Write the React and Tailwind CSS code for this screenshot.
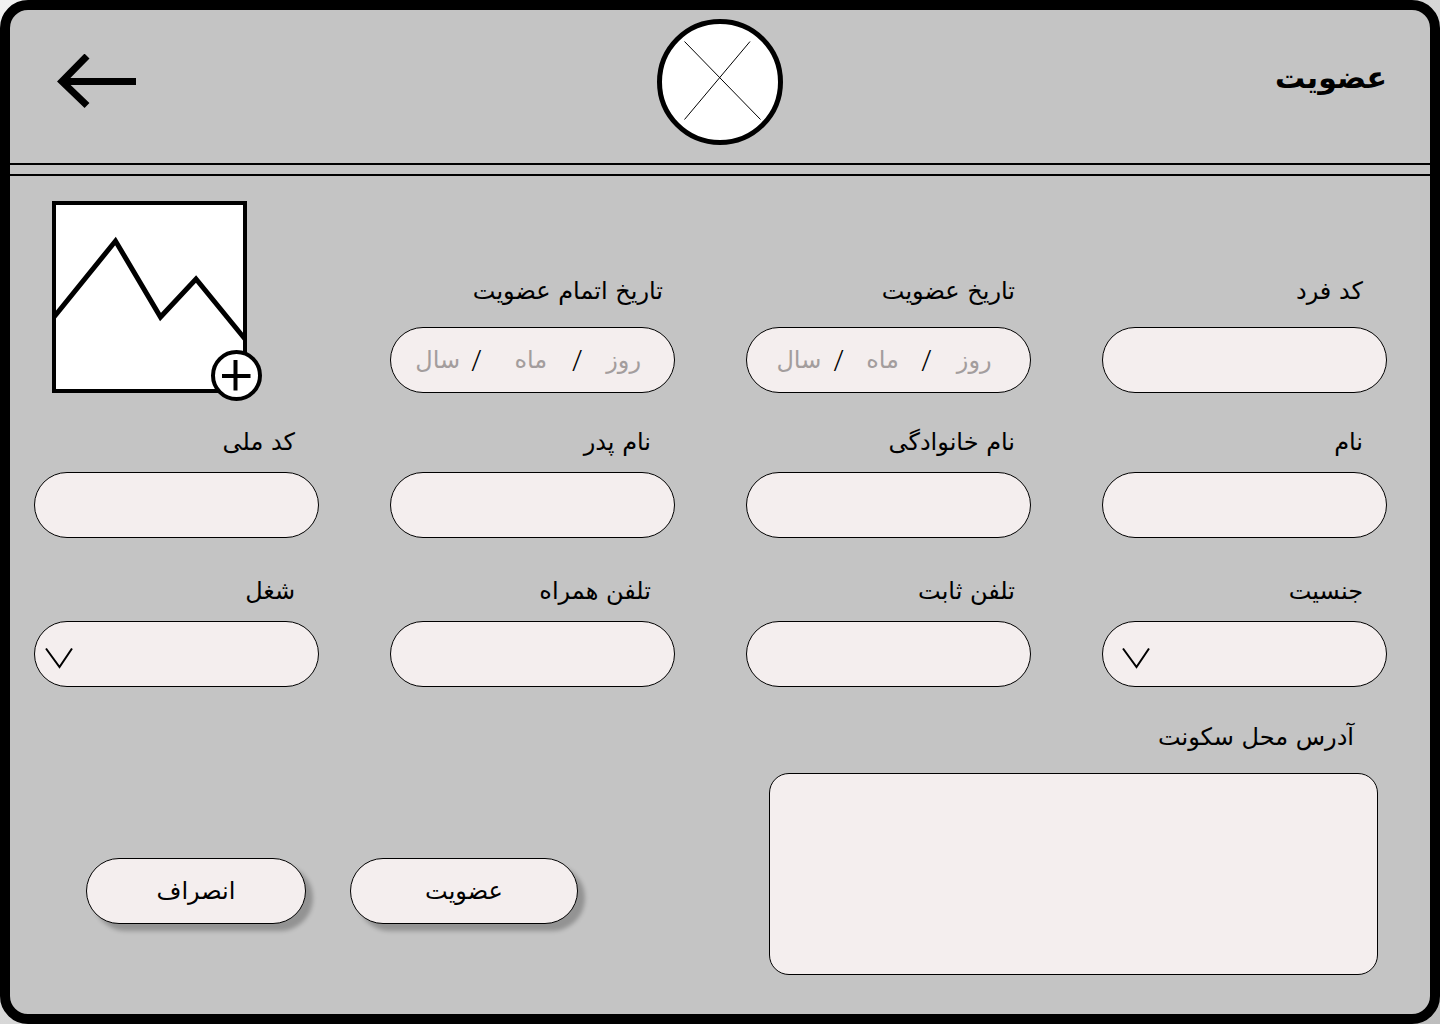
import React from "react";

const pill =
  "h-[66px] w-full rounded-full border border-black bg-[#f4eeee] px-6 text-2xl outline-none";

function Label({ htmlFor, className, children }) {
  return (
    <label htmlFor={htmlFor} className={`block text-2xl leading-9 whitespace-nowrap ${className}`}>
      {children}
    </label>
  );
}

function TextField({ id, label, labelClass, gap = "mb-3" }) {
  return (
    <div>
      <Label htmlFor={id} className={`${labelClass} ${gap}`}>
        {label}
      </Label>
      <input id={id} type="text" className={pill} />
    </div>
  );
}

function SelectField({ id, label, labelClass, chevronClass }) {
  return (
    <div>
      <Label htmlFor={id} className={`${labelClass} mb-3`}>
        {label}
      </Label>
      <div className="relative">
        <select id={id} className={`${pill} block appearance-none`} />
        <svg
          className={`pointer-events-none absolute top-[26px] ${chevronClass}`}
          width="28"
          height="22"
          viewBox="0 0 28 22"
          fill="none"
          stroke="black"
          strokeWidth="2"
          aria-hidden="true"
        >
          <path d="M1 1.5L14.5 20L27 1.5" />
        </svg>
      </div>
    </div>
  );
}

const datePart =
  "min-w-0 bg-transparent text-center text-2xl outline-none placeholder:text-[#a39d9d] placeholder:opacity-100";

function Slash() {
  return (
    <span className="w-4 shrink-0 text-center font-['Open_Sans',sans-serif] text-3xl font-light" aria-hidden="true">
      /
    </span>
  );
}

function DateField({ id, label, labelClass, padClass, dayClass, monthClass, yearClass }) {
  return (
    <div>
      <Label htmlFor={`${id}-day`} className={`${labelClass} mb-[18px]`}>
        {label}
      </Label>
      <div
        role="group"
        aria-label={label}
        className={`flex h-[66px] items-center rounded-full border border-black bg-[#f4eeee] ${padClass}`}
      >
        <input id={`${id}-day`} type="text" placeholder="روز" className={`${datePart} ${dayClass}`} />
        <Slash />
        <input type="text" aria-label="ماه" placeholder="ماه" className={`${datePart} ${monthClass}`} />
        <Slash />
        <input type="text" aria-label="سال" placeholder="سال" className={`${datePart} ${yearClass}`} />
      </div>
    </div>
  );
}

function PhotoButton() {
  return (
    <button type="button" aria-label="افزودن عکس" className="relative ml-[18px] block h-48 w-[195px] self-end justify-self-end">
      <svg width="195" height="192" viewBox="0 0 195 192" fill="white" stroke="black" strokeWidth="4">
        <rect x="2" y="2" width="191" height="188" />
        <path d="M2 116L63.500 40L108.500 116L144 78L193 138" fill="none" strokeWidth="5" />
      </svg>
      <svg
        className="absolute top-[149px] left-[159px]"
        width="51"
        height="51"
        viewBox="0 0 51 51"
        fill="white"
        stroke="black"
        strokeWidth="4"
      >
        <circle cx="25.500" cy="25.500" r="23.500" />
        <path d="M11 26H39.500M24.500 10V40.500" />
      </svg>
    </button>
  );
}

const action =
  "h-[66px] rounded-full border border-black bg-[#f4eeee] text-2xl shadow-[7px_7px_4px_rgba(0,0,0,0.25)]";

export default function App() {
  return (
    <div className="min-h-screen bg-linear-to-br from-[#f2f2f2] to-[#bdbdbd]">
      <main
        dir="rtl"
        lang="fa"
        className="min-h-screen rounded-[28px] border-10 border-black bg-[#c4c4c4] font-['DejaVu_Sans',sans-serif] text-black"
      >
        <header className="grid h-[153px] grid-cols-3 items-center px-[43px] pb-[10px]">
          <h1 className="pb-2 text-3xl font-bold">عضویت</h1>
          <svg className="justify-self-center" width="126" height="126" viewBox="0 0 126 126" aria-hidden="true">
            <circle cx="63" cy="63" r="60.500" fill="white" stroke="black" strokeWidth="5" />
            <path d="M27.500 22.500L103.500 100.500M93 22.500L27.500 100.500" stroke="black" fill="none" />
          </svg>
          <button type="button" aria-label="بازگشت" className="justify-self-end">
            <svg width="83" height="56" viewBox="0 0 83 56" fill="none" stroke="black">
              <path d="M8 27.500H83" strokeWidth="7" />
              <path d="M34 2L9 27.500L34 51.500" strokeWidth="7" />
            </svg>
          </button>
        </header>
        <div className="h-[13px] border-y-2 border-black" />

        <form className="pt-[25px] pr-[43px] pl-6">
          <div className="grid grid-cols-4 items-end gap-x-[71px]">
            <TextField id="code" label="کد فرد" labelClass="pr-6" gap="mb-[18px]" />
            <DateField
              id="start"
              label="تاریخ عضویت"
              labelClass="pr-4"
              padClass="pr-4 pl-5"
              dayClass="flex-[80]"
              monthClass="flex-[72]"
              yearClass="flex-[64]"
            />
            <DateField
              id="end"
              label="تاریخ اتمام عضویت"
              labelClass="pr-3"
              padClass="pr-3 pl-4"
              dayClass="flex-[80]"
              monthClass="flex-[80] pl-2"
              yearClass="flex-[64]"
            />
            <PhotoButton />
          </div>

          <div className="mt-[31px] grid grid-cols-4 gap-x-[71px] gap-y-[35px]">
            <TextField id="name" label="نام" labelClass="pr-6" />
            <TextField id="family" label="نام خانوادگی" labelClass="pr-4" />
            <TextField id="father" label="نام پدر" labelClass="pr-6" />
            <TextField id="national" label="کد ملی" labelClass="pr-6" />
            <SelectField id="gender" label="جنسیت" labelClass="pr-6" chevronClass="left-5" />
            <TextField id="phone" label="تلفن ثابت" labelClass="pr-4" />
            <TextField id="mobile" label="تلفن همراه" labelClass="pr-6" />
            <SelectField id="job" label="شغل" labelClass="pr-6" chevronClass="left-[11px]" />
          </div>

          <div className="mt-8 flex items-start justify-between pr-[9px] pl-[52px]">
            <div className="w-[609px] shrink">
              <Label htmlFor="address" className="mb-[18px] pr-6">
                آدرس محل سکونت
              </Label>
              <textarea
                id="address"
                className="block h-[202px] w-full resize-none rounded-[20px] border border-black bg-[#f4eeee] p-5 text-2xl outline-none"
              />
            </div>
            <div className="mt-[139px] flex gap-11">
              <button type="submit" className={`${action} w-[228px]`}>
                عضویت
              </button>
              <button type="button" className={`${action} w-[220px]`}>
                انصراف
              </button>
            </div>
          </div>
        </form>
      </main>
    </div>
  );
}
